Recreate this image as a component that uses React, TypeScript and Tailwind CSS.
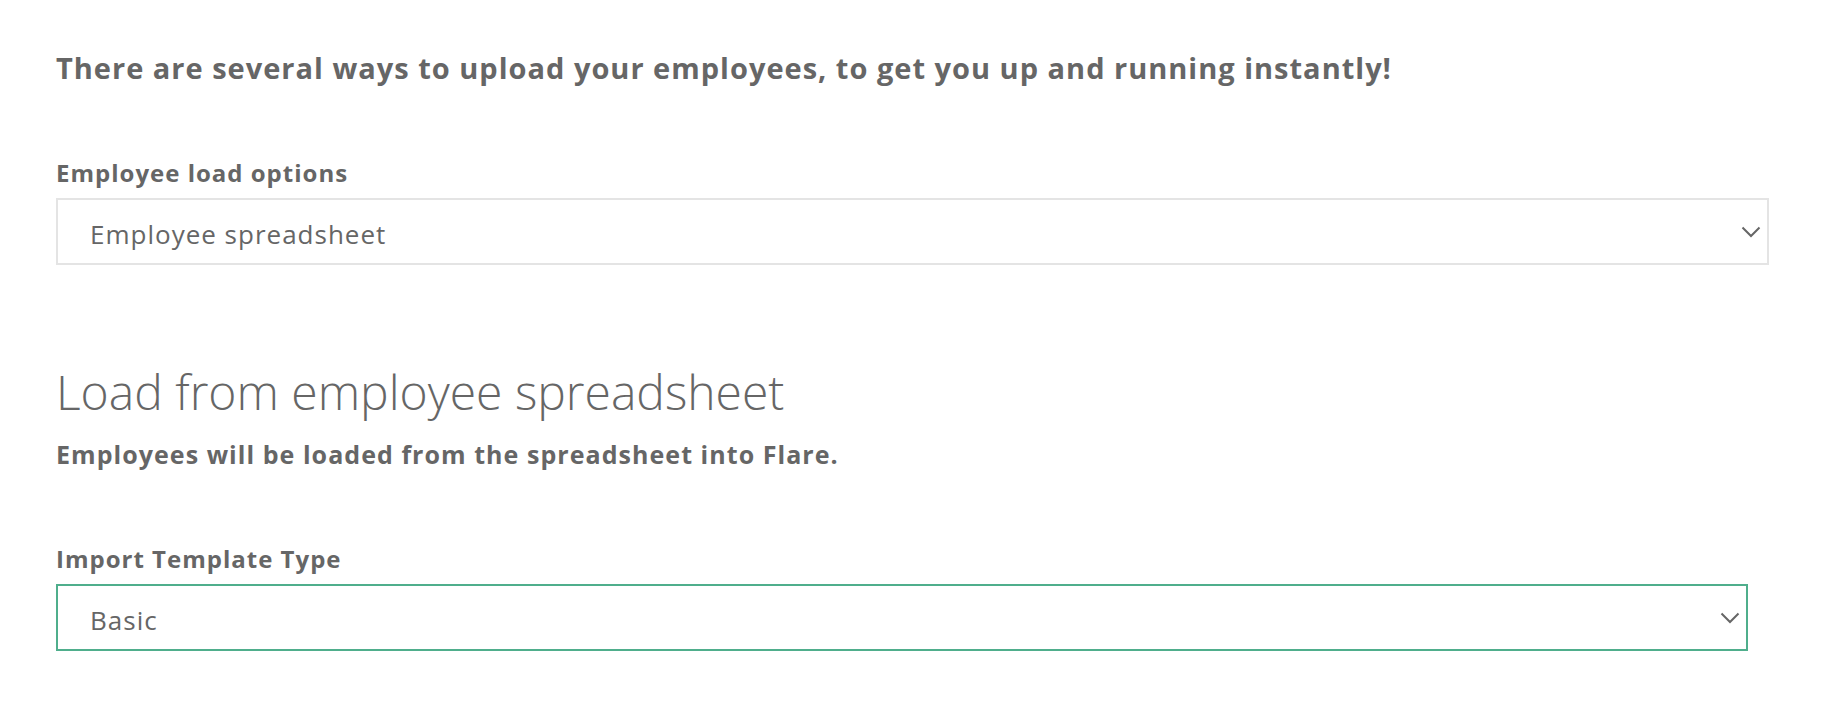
import React from "react";

function Chevron() {
  return (
    <svg width="20" height="12" viewBox="0 0 20 12" fill="none" className="shrink-0">
      <polyline points="1.5,1.5 10,10 18.5,1.5" stroke="#666666" strokeWidth="2" fill="none" />
    </svg>
  );
}

function SelectBox({ value, width, border }: { value: string; width: string; border: string }) {
  return (
    <div className={`flex h-[67px] items-center justify-between bg-white pl-[32px] pr-[6px] ${width} ${border}`}>
      <span className="pt-[4px] text-[26px] leading-[36px] font-normal tracking-[1px] text-[#666666]">{value}</span>
      <Chevron />
    </div>
  );
}

export default function App() {
  return (
    <div
      className="min-h-[708px] w-full bg-white pl-[56px] pt-[51px] text-[#666666]"
      style={{ fontFamily: '"Open Sans", "Noto Sans", sans-serif' }}
    >
      <h1 className="text-[29px] leading-[34px] font-bold tracking-[1px]">
        There are several ways to upload your employees, to get you up and running instantly!
      </h1>

      <label className="mt-[72px] block text-[24px] leading-[32px] font-bold tracking-[1px]">Employee load options</label>
      <div className="mt-[9px]">
        <SelectBox value="Employee spreadsheet" width="w-[1713px]" border="border-2 border-[#e4e4e4]" />
      </div>

      <h2 className="mt-[98px] text-[48px] leading-[58px] font-light">Load from employee spreadsheet</h2>
      <p className="mt-[17px] text-[25px] leading-[32px] font-bold tracking-[1.05px]">
        Employees will be loaded from the spreadsheet into Flare.
      </p>

      <label className="mt-[73px] block text-[24px] leading-[32px] font-bold tracking-[1px]">Import Template Type</label>
      <div className="mt-[9px]">
        <SelectBox value="Basic" width="w-[1692px]" border="border-2 border-[#4fae8c]" />
      </div>
    </div>
  );
}
